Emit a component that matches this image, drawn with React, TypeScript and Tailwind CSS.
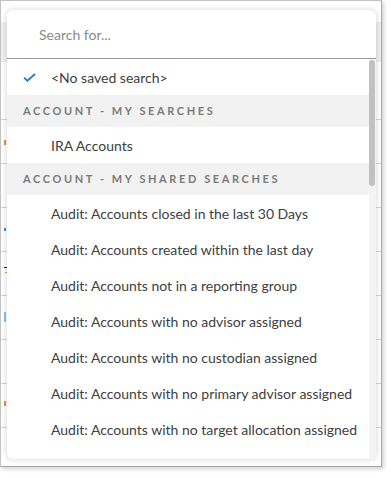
import React from 'react';

const sharedSearches = [
  'Audit: Accounts closed in the last 30 Days',
  'Audit: Accounts created within the last day',
  'Audit: Accounts not in a reporting group',
  'Audit: Accounts with no advisor assigned',
  'Audit: Accounts with no custodian assigned',
  'Audit: Accounts with no primary advisor assigned',
  'Audit: Accounts with no target allocation assigned',
];

function CheckIcon() {
  return (
    <svg width="13" height="9" viewBox="0 0 13 9" fill="none">
      <path d="M1 4.6L4.4 7.7L12 1" stroke="#1b7fcf" strokeWidth="1.8" />
    </svg>
  );
}

function GroupHeader({ label }: { label: string }) {
  return (
    <div className="h-8 shrink-0 flex items-center pl-4 bg-[#f2f2f2] text-[11px] font-bold tracking-[2.6px] text-[#7a7a7a]">
      {label}
    </div>
  );
}

function Item({ label, checked }: { label: string; checked?: boolean }) {
  return (
    <div className="h-9 shrink-0 flex items-center text-[14px] text-[#404040]">
      <span className="w-11 flex justify-center pl-[1px]">{checked ? <CheckIcon /> : null}</span>
      <span>{label}</span>
    </div>
  );
}

// faint rows of the table behind the dropdown
function BackgroundRows() {
  const rows = [118, 162, 206, 250, 294, 338, 382, 426];
  return (
    <div className="absolute inset-0 pointer-events-none">
      <div className="absolute left-0 right-0 top-[21px] h-[40px] bg-[#efefef]" />
      {rows.map((y) => (
        <div key={y} className="absolute left-0 right-0 h-px bg-[#d6d6d6]" style={{ top: y }} />
      ))}
      <div className="absolute left-[3px] top-[139px] w-[2px] h-[5px] bg-[#e0962b]" />
      <div className="absolute left-[3px] top-[227px] w-[2px] h-[3px] bg-[#3d8fd8]" />
      <div className="absolute left-[3px] top-[266px] w-[3px] h-px bg-[#222]" />
      <div className="absolute left-[4px] top-[271px] w-[2px] h-px bg-[#e0962b]" />
      <div className="absolute left-[3px] top-[311px] w-[2px] h-[10px] bg-[#8cc0ee]" />
      <div className="absolute left-[3px] top-[400px] w-[2px] h-[5px] bg-[#e0962b]" />
    </div>
  );
}

export default function App() {
  return (
    <div className="w-[391px] h-[478px] bg-white" style={{ fontFamily: 'Lato, "Open Sans", sans-serif' }}>
      <div className="relative w-[382px] h-[467px] border border-[#c3c3c3] border-r-[#a9a9a9] border-b-[#a9a9a9] bg-white shadow-[2px_2px_4px_rgba(0,0,0,0.18)] overflow-hidden">
        <BackgroundRows />
        <div className="relative ml-[6px] mt-[9px] w-[369px] h-[449px] bg-white rounded-md shadow-[0_0_6px_rgba(0,0,0,0.18)] flex flex-col overflow-hidden">
          <div className="h-[49px] shrink-0 flex items-center pl-8 border-b border-[#9a9a9a] text-[14px] text-[#8a8a8a]">
            Search for...
          </div>
          <div className="flex flex-1 min-h-0 overflow-hidden">
            <div className="flex-1 flex flex-col overflow-hidden">
              <Item label="<No saved search>" checked />
              <GroupHeader label="ACCOUNT - MY SEARCHES" />
              <Item label="IRA Accounts" />
              <GroupHeader label="ACCOUNT - MY SHARED SEARCHES" />
              {sharedSearches.map((s) => (
                <Item key={s} label={s} />
              ))}
            </div>
            <div className="w-[7px] bg-[#f4f4f4] pt-[1px]">
              <div className="w-[6px] h-[126px] rounded-full bg-[#c1c1c1]" />
            </div>
          </div>
        </div>
      </div>
    </div>
  );
}
